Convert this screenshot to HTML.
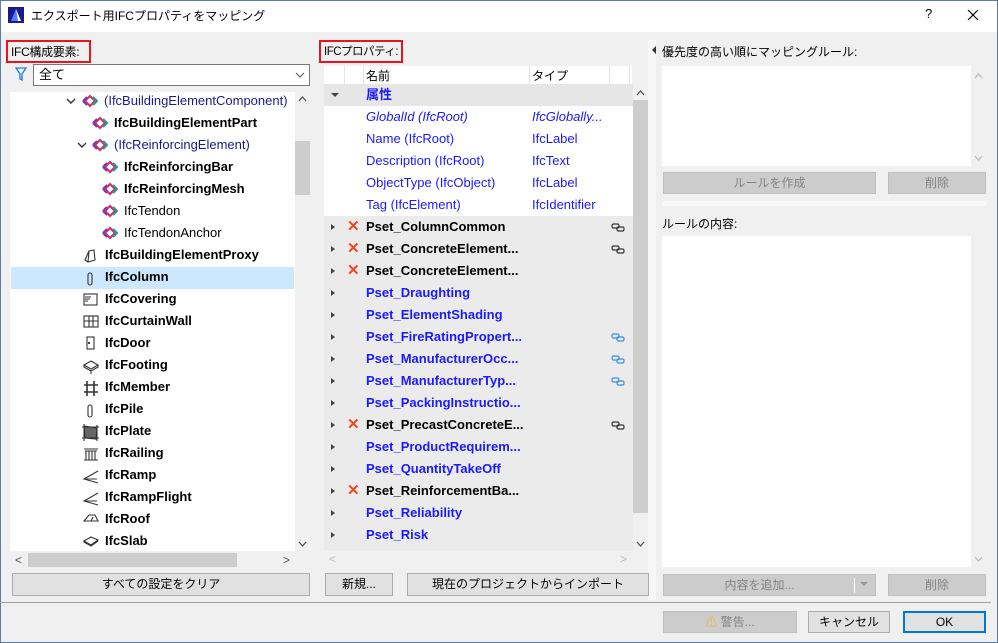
<!DOCTYPE html>
<html><head><meta charset="utf-8"><style>
*{box-sizing:border-box;margin:0;padding:0}
body{width:998px;height:643px;overflow:hidden;background:#f0f0f0;font-family:"Liberation Sans","Noto Sans CJK JP",sans-serif;font-size:12px;color:#000;position:relative}
.a{position:absolute}
.win{position:absolute;left:0;top:0;width:998px;height:643px;border:1px solid #5a7ca8;border-top:none}
.title{position:absolute;left:0;top:0;width:998px;height:32px;background:#fff;border:1px solid #5a7ca8;border-bottom:none}
.lbl{position:absolute;border:2px solid #e8141e;height:23px;padding:2px 3px;font-size:12px;line-height:17px;white-space:nowrap;overflow:hidden;letter-spacing:-0.3px}
.btn{position:absolute;background:#e1e1e1;border:1px solid #adadad;text-align:center;line-height:20px;font-size:12px}
.dis{background:#cccccc;border-color:#bfbfbf;color:#838383}
.row{position:absolute;height:22px;line-height:22px;font-size:13px;white-space:nowrap}
.b{font-weight:bold}
.blue{color:#1a1aff}
.it{font-style:italic}
.ic{position:absolute;width:16px;height:16px;top:3px}
.x{position:absolute;color:#ec4a26;font-size:15px;font-weight:bold;left:23px;top:0}
.tri{position:absolute;left:7px;top:8px;width:0;height:0;border-left:4px solid #444;border-top:3.5px solid transparent;border-bottom:3.5px solid transparent}
.lnk{position:absolute;left:287px;top:7px}
</style></head><body>
<div class="title"></div>
<div class="win"></div>
<svg class="a" style="left:8px;top:7px" width="16" height="16"><rect x="0" y="0" width="16" height="16" fill="#1a1a8c"/><path d="M3 14 L8 2 L13 14 Z" fill="#4f7bff"/><path d="M8 2 L13 14 L10 14 Z" fill="#fff"/></svg>
<div class="a" style="left:31px;top:7px;font-size:12px">エクスポート用IFCプロパティをマッピング</div>
<div class="a" style="left:925px;top:6px;font-size:13px">?</div>
<svg class="a" style="left:967px;top:9px" width="12" height="12"><path d="M1 1L11 11M11 1L1 11" stroke="#000" stroke-width="1.2"/></svg>

<!-- LEFT -->
<div class="lbl" style="left:6px;top:40px;width:85px">IFC構成要素:</div>
<svg class="a" style="left:15px;top:67px" width="12" height="14"><path d="M1 1H11L7 7V13L5 12V7Z" fill="none" stroke="#1e7be0" stroke-width="1.3"/></svg>
<div class="a" style="left:33px;top:64px;width:277px;height:22px;background:#fff;border:1px solid #7a7a7a;padding:0 5px;line-height:20px;font-size:13px">全て</div>
<svg class="a" style="left:295px;top:72px" width="10" height="6"><path d="M1 1L5 5L9 1" fill="none" stroke="#555"/></svg>
<div class="a" style="left:10px;top:92px;width:285px;height:459px;background:#fff"></div>
<div class="a" style="left:295px;top:92px;width:15px;height:459px;background:#f0f0f0"></div>
<div class="a" style="left:295px;top:141px;width:15px;height:54px;background:#cdcdcd"></div>
<svg class="a" style="left:298px;top:96px" width="9" height="6"><path d="M1 5L4.5 1L8 5" fill="none" stroke="#555" stroke-width="1.3"/></svg>
<svg class="a" style="left:298px;top:541px" width="9" height="6"><path d="M1 1L4.5 5L8 1" fill="none" stroke="#555" stroke-width="1.3"/></svg>
<div class="a" style="left:28px;top:553px;width:209px;height:14px;background:#cdcdcd"></div>
<div class="a" style="left:15px;top:553px;font-size:12px;color:#555">&lt;</div>
<div class="a" style="left:283px;top:553px;font-size:12px;color:#555">&gt;</div>
<div class="a" style="left:11px;top:267px;width:283px;height:22px;background:#cce8ff"></div>

<svg width="0" height="0" style="position:absolute"><defs>
<g id="ifc"><path d="M3 8L8 3L13 8L8 13Z" fill="none" stroke="#d0306a" stroke-width="2.2"/><path d="M1 8L5 4M5 12L1 8" stroke="#7a3bb0" stroke-width="2.2"/><path d="M11 4L15 8L11 12" fill="none" stroke="#2a9a8a" stroke-width="2.2"/></g>
<g id="lk" fill="none" stroke-width="1.2"><rect x="1" y="1" width="7" height="4" rx="1.5"/><rect x="6" y="4" width="7" height="4" rx="1.5"/></g>
</defs></svg>

<svg class="a" style="left:66px;top:97px" width="10" height="8"><path d="M1 2L5 6L9 2" fill="none" stroke="#333" stroke-width="1.4"/></svg>
<div class="row" style="left:82px;top:90px"><svg class="ic" style="left:0" width="16" height="16"><use href="#ifc"/></svg><span style="margin-left:22px;color:#1a1a8c">(IfcBuildingElementComponent)</span></div>
<div class="row b" style="left:92px;top:112px"><svg class="ic" style="left:0" width="16" height="16"><use href="#ifc"/></svg><span style="margin-left:22px">IfcBuildingElementPart</span></div>
<svg class="a" style="left:77px;top:141px" width="10" height="8"><path d="M1 2L5 6L9 2" fill="none" stroke="#333" stroke-width="1.4"/></svg>
<div class="row" style="left:92px;top:134px"><svg class="ic" style="left:0" width="16" height="16"><use href="#ifc"/></svg><span style="margin-left:22px;color:#1a1a8c">(IfcReinforcingElement)</span></div>
<div class="row b" style="left:102px;top:156px"><svg class="ic" style="left:0" width="16" height="16"><use href="#ifc"/></svg><span style="margin-left:22px">IfcReinforcingBar</span></div>
<div class="row b" style="left:102px;top:178px"><svg class="ic" style="left:0" width="16" height="16"><use href="#ifc"/></svg><span style="margin-left:22px">IfcReinforcingMesh</span></div>
<div class="row" style="left:102px;top:200px"><svg class="ic" style="left:0" width="16" height="16"><use href="#ifc"/></svg><span style="margin-left:22px">IfcTendon</span></div>
<div class="row" style="left:102px;top:222px"><svg class="ic" style="left:0" width="16" height="16"><use href="#ifc"/></svg><span style="margin-left:22px">IfcTendonAnchor</span></div>

<svg class="a" style="left:82px;top:248px" width="18" height="280" fill="none" stroke="#333" stroke-width="1.1">
<path d="M3 12L7 3L12 2L13 12L6 14Z M7 3L6 14"/>
<rect x="6" y="25" width="4" height="12" rx="2"/>
<rect x="2" y="46" width="13" height="11"/><path d="M3 49H9M3 51H8M3 53H6"/>
<rect x="2" y="68" width="14" height="11"/><path d="M7 68V79M11 68V79M2 73H16"/>
<rect x="5" y="89" width="7" height="12"/><circle cx="7" cy="95" r=".6"/>
<path d="M2 117L9 113L16 117L9 121Z M2 117V119L9 123L16 119V117 M9 123V126"/>
<path d="M5 133V148M12 133V148M2 137H16M2 144H16" stroke-width="1.6"/>
<rect x="6" y="157" width="4" height="12" rx="2"/>
<path d="M2 178L15 180L14 191L3 190Z" fill="#666"/><path d="M2 176V193M15 177V193M0 179H17M0 190H17"/>
<path d="M2 201H16M3 203H15M4 203V212M7 203V212M10 203V212M13 203V212M2 212H16"/>
<path d="M16 223L2 231L16 235M2 231H15"/>
<path d="M16 245L2 253L16 257M2 253H15"/>
<path d="M2 273L7 267H13L16 273H2Z M9 273L11 269"/>
</svg>
<svg class="a" style="left:82px;top:533px" width="18" height="16" fill="none" stroke="#333" stroke-width="1.1"><path d="M2 8L9 4L16 7L9 12Z M2 8L2 9L9 13L16 8"/></svg>

<div class="row b" style="left:105px;top:244px">IfcBuildingElementProxy</div>
<div class="row b" style="left:105px;top:266px">IfcColumn</div>
<div class="row b" style="left:105px;top:288px">IfcCovering</div>
<div class="row b" style="left:105px;top:310px">IfcCurtainWall</div>
<div class="row b" style="left:105px;top:332px">IfcDoor</div>
<div class="row b" style="left:105px;top:354px">IfcFooting</div>
<div class="row b" style="left:105px;top:376px">IfcMember</div>
<div class="row b" style="left:105px;top:398px">IfcPile</div>
<div class="row b" style="left:105px;top:420px">IfcPlate</div>
<div class="row b" style="left:105px;top:442px">IfcRailing</div>
<div class="row b" style="left:105px;top:464px">IfcRamp</div>
<div class="row b" style="left:105px;top:486px">IfcRampFlight</div>
<div class="row b" style="left:105px;top:508px">IfcRoof</div>
<div class="row b" style="left:105px;top:530px">IfcSlab</div>
<div class="btn" style="left:12px;top:573px;width:298px;height:23px">すべての設定をクリア</div>

<!-- MIDDLE -->
<div class="lbl" style="left:319px;top:40px;width:84px;font-size:11.5px;letter-spacing:-0.5px">IFCプロパティ:</div>
<div class="a" style="left:324px;top:66px;width:308px;height:18px;background:#fff"></div>
<div class="a" style="left:344px;top:66px;width:1px;height:18px;background:#e5e5e5"></div>
<div class="a" style="left:363px;top:66px;width:1px;height:18px;background:#e5e5e5"></div>
<div class="a" style="left:529px;top:66px;width:1px;height:18px;background:#e5e5e5"></div>
<div class="a" style="left:609px;top:66px;width:1px;height:18px;background:#e5e5e5"></div>
<div class="a" style="left:629px;top:66px;width:1px;height:18px;background:#e5e5e5"></div>
<div class="a" style="left:366px;top:67px;font-size:12px">名前</div>
<div class="a" style="left:532px;top:67px;font-size:12px">タイプ</div>
<div class="a" style="left:324px;top:84px;width:309px;height:22px;background:#e6e6e6"></div>
<div class="a" style="left:324px;top:106px;width:309px;height:110px;background:#fff"></div>
<div class="a" style="left:324px;top:216px;width:309px;height:335px;background:#ebebeb"></div>
<div class="a" style="left:633px;top:84px;width:15px;height:467px;background:#f0f0f0"></div>
<div class="a" style="left:633px;top:100px;width:15px;height:413px;background:#cdcdcd"></div>
<svg class="a" style="left:636px;top:90px" width="9" height="6"><path d="M1 5L4.5 1L8 5" fill="none" stroke="#555" stroke-width="1.3"/></svg>
<svg class="a" style="left:636px;top:541px" width="9" height="6"><path d="M1 1L4.5 5L8 1" fill="none" stroke="#555" stroke-width="1.3"/></svg>
<div class="a" style="left:329px;top:552px;font-size:12px;color:#bbb">&lt;</div>
<div class="a" style="left:620px;top:552px;font-size:12px;color:#bbb">&gt;</div>
<div class="a" style="left:648px;top:40px;width:8px;height:560px;background:#f7f7f7"></div>
<div class="a" style="left:652px;top:46px;width:0;height:0;border-right:4px solid #333;border-top:4px solid transparent;border-bottom:4px solid transparent"></div>

<div class="a" style="left:331px;top:93px;width:0;height:0;border-top:4px solid #444;border-left:4px solid transparent;border-right:4px solid transparent"></div>
<div class="row b blue" style="left:366px;top:84px">属性</div>
<div class="row blue it" style="left:366px;top:106px">GlobalId (IfcRoot)</div><div class="row blue it" style="left:532px;top:106px">IfcGlobally...</div>
<div class="row blue" style="left:366px;top:128px">Name (IfcRoot)</div><div class="row blue" style="left:532px;top:128px">IfcLabel</div>
<div class="row blue" style="left:366px;top:150px">Description (IfcRoot)</div><div class="row blue" style="left:532px;top:150px">IfcText</div>
<div class="row blue" style="left:366px;top:172px">ObjectType (IfcObject)</div><div class="row blue" style="left:532px;top:172px">IfcLabel</div>
<div class="row blue" style="left:366px;top:194px">Tag (IfcElement)</div><div class="row blue" style="left:532px;top:194px">IfcIdentifier</div>

<div class="a" style="left:324px;top:216px;width:309px;height:330px">
<div class="row" style="left:0;top:0;width:309px"><div class="tri"></div><span class="x">✕</span><span class="b" style="position:absolute;left:42px">Pset_ColumnCommon</span><svg class="lnk" width="14" height="9" stroke="#333"><use href="#lk"/></svg></div>
<div class="row" style="left:0;top:22px;width:309px"><div class="tri"></div><span class="x">✕</span><span class="b" style="position:absolute;left:42px">Pset_ConcreteElement...</span><svg class="lnk" width="14" height="9" stroke="#333"><use href="#lk"/></svg></div>
<div class="row" style="left:0;top:44px;width:309px"><div class="tri"></div><span class="x">✕</span><span class="b" style="position:absolute;left:42px">Pset_ConcreteElement...</span></div>
<div class="row" style="left:0;top:66px;width:309px"><div class="tri"></div><span class="b blue" style="position:absolute;left:42px">Pset_Draughting</span></div>
<div class="row" style="left:0;top:88px;width:309px"><div class="tri"></div><span class="b blue" style="position:absolute;left:42px">Pset_ElementShading</span></div>
<div class="row" style="left:0;top:110px;width:309px"><div class="tri"></div><span class="b blue" style="position:absolute;left:42px">Pset_FireRatingPropert...</span><svg class="lnk" width="14" height="9" stroke="#3a8ee6"><use href="#lk"/></svg></div>
<div class="row" style="left:0;top:132px;width:309px"><div class="tri"></div><span class="b blue" style="position:absolute;left:42px">Pset_ManufacturerOcc...</span><svg class="lnk" width="14" height="9" stroke="#3a8ee6"><use href="#lk"/></svg></div>
<div class="row" style="left:0;top:154px;width:309px"><div class="tri"></div><span class="b blue" style="position:absolute;left:42px">Pset_ManufacturerTyp...</span><svg class="lnk" width="14" height="9" stroke="#3a8ee6"><use href="#lk"/></svg></div>
<div class="row" style="left:0;top:176px;width:309px"><div class="tri"></div><span class="b blue" style="position:absolute;left:42px">Pset_PackingInstructio...</span></div>
<div class="row" style="left:0;top:198px;width:309px"><div class="tri"></div><span class="x">✕</span><span class="b" style="position:absolute;left:42px">Pset_PrecastConcreteE...</span><svg class="lnk" width="14" height="9" stroke="#333"><use href="#lk"/></svg></div>
<div class="row" style="left:0;top:220px;width:309px"><div class="tri"></div><span class="b blue" style="position:absolute;left:42px">Pset_ProductRequirem...</span></div>
<div class="row" style="left:0;top:242px;width:309px"><div class="tri"></div><span class="b blue" style="position:absolute;left:42px">Pset_QuantityTakeOff</span></div>
<div class="row" style="left:0;top:264px;width:309px"><div class="tri"></div><span class="x">✕</span><span class="b" style="position:absolute;left:42px">Pset_ReinforcementBa...</span></div>
<div class="row" style="left:0;top:286px;width:309px"><div class="tri"></div><span class="b blue" style="position:absolute;left:42px">Pset_Reliability</span></div>
<div class="row" style="left:0;top:308px;width:309px"><div class="tri"></div><span class="b blue" style="position:absolute;left:42px">Pset_Risk</span></div>
</div>
<div class="btn" style="left:325px;top:573px;width:68px;height:23px">新規...</div>
<div class="btn" style="left:407px;top:573px;width:242px;height:23px">現在のプロジェクトからインポート</div>

<!-- RIGHT -->
<div class="a" style="left:662px;top:43px;font-size:12px">優先度の高い順にマッピングルール:</div>
<div class="a" style="left:662px;top:66px;width:309px;height:100px;background:#fff"></div>
<svg class="a" style="left:974px;top:73px" width="9" height="6"><path d="M1 5L4.5 1L8 5" fill="none" stroke="#bbb" stroke-width="1.3"/></svg>
<svg class="a" style="left:974px;top:155px" width="9" height="6"><path d="M1 1L4.5 5L8 1" fill="none" stroke="#bbb" stroke-width="1.3"/></svg>
<div class="btn dis" style="left:663px;top:172px;width:213px;height:22px">ルールを作成</div>
<div class="btn dis" style="left:888px;top:172px;width:98px;height:22px">削除</div>
<div class="a" style="left:662px;top:201px;width:325px;height:5px;background:#f7f7f7"></div>
<div class="a" style="left:662px;top:215px;font-size:12px">ルールの内容:</div>
<div class="a" style="left:662px;top:236px;width:309px;height:331px;background:#fff"></div>
<svg class="a" style="left:974px;top:556px" width="9" height="6"><path d="M1 1L4.5 5L8 1" fill="none" stroke="#bbb" stroke-width="1.3"/></svg>
<div class="btn dis" style="left:663px;top:574px;width:213px;height:22px;padding-right:20px">内容を追加...</div>
<div class="a" style="left:854px;top:578px;width:1px;height:15px;background:#fff"></div>
<div class="a" style="left:860px;top:582px;width:0;height:0;border-top:4px solid #999;border-left:4px solid transparent;border-right:4px solid transparent"></div>
<div class="btn dis" style="left:888px;top:574px;width:98px;height:22px">削除</div>

<div class="a" style="left:0;top:602px;width:991px;height:1px;background:#a0a0a0"></div>
<div class="btn dis" style="left:663px;top:611px;width:134px;height:22px"><span style="color:#e0c040">⚠</span> 警告...</div>
<div class="btn" style="left:808px;top:611px;width:82px;height:22px">キャンセル</div>
<div class="btn" style="left:903px;top:611px;width:83px;height:22px;border:2px solid #0078d7;line-height:18px">OK</div>
</body></html>
